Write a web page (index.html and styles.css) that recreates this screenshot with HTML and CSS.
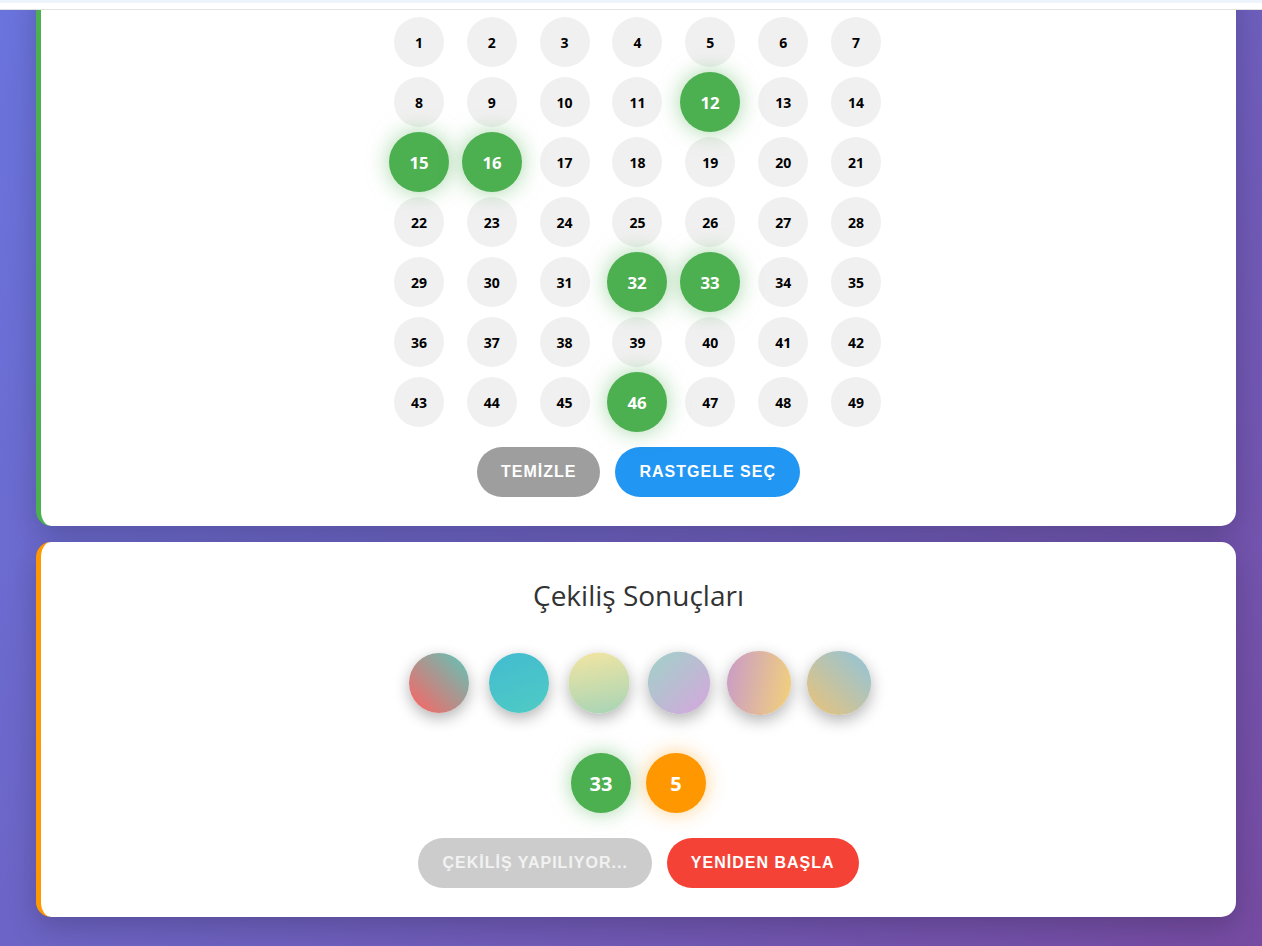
FILE: index.html
```html
<!DOCTYPE html>
<html lang="tr">
<head>
<meta charset="utf-8">
<title>Sayısal Loto</title>
<link rel="stylesheet" href="styles.css">
</head>
<body>
<div class="topbar"></div>
<main class="page">
  <section class="card card-select">
    <div class="grid">
      <div class="ball">1</div><div class="ball">2</div><div class="ball">3</div><div class="ball">4</div><div class="ball">5</div><div class="ball">6</div><div class="ball">7</div>
      <div class="ball">8</div><div class="ball">9</div><div class="ball">10</div><div class="ball">11</div><div class="ball selected">12</div><div class="ball">13</div><div class="ball">14</div>
      <div class="ball selected">15</div><div class="ball selected">16</div><div class="ball">17</div><div class="ball">18</div><div class="ball">19</div><div class="ball">20</div><div class="ball">21</div>
      <div class="ball">22</div><div class="ball">23</div><div class="ball">24</div><div class="ball">25</div><div class="ball">26</div><div class="ball">27</div><div class="ball">28</div>
      <div class="ball">29</div><div class="ball">30</div><div class="ball">31</div><div class="ball selected">32</div><div class="ball selected">33</div><div class="ball">34</div><div class="ball">35</div>
      <div class="ball">36</div><div class="ball">37</div><div class="ball">38</div><div class="ball">39</div><div class="ball">40</div><div class="ball">41</div><div class="ball">42</div>
      <div class="ball">43</div><div class="ball">44</div><div class="ball">45</div><div class="ball selected">46</div><div class="ball">47</div><div class="ball">48</div><div class="ball">49</div>
    </div>
    <div class="actions">
      <button class="btn btn-gray">TEMİZLE</button>
      <button class="btn btn-blue">RASTGELE SEÇ</button>
    </div>
  </section>

  <section class="card card-results">
    <h2 class="title">Çekiliş Sonuçları</h2>
    <div class="spin-row">
      <div class="spin spin-1"></div>
      <div class="spin spin-2"></div>
      <div class="spin spin-3"></div>
      <div class="spin spin-4"></div>
      <div class="spin spin-5"></div>
      <div class="spin spin-6"></div>
    </div>
    <div class="drawn-row">
      <div class="drawn drawn-green">33</div>
      <div class="drawn drawn-orange">5</div>
    </div>
    <div class="actions actions-results">
      <button class="btn btn-disabled">ÇEKİLİŞ YAPILIYOR...</button>
      <button class="btn btn-red">YENİDEN BAŞLA</button>
    </div>
  </section>
</main>
</body>
</html>
```

FILE: styles.css
```css
html, body {
  margin: 0;
  padding: 0;
}

body {
  min-height: 946px;
  background: linear-gradient(135deg, #6a74dd 0%, #6d62c2 50%, #764ba2 100%) fixed;
  font-family: "Open Sans", "Noto Sans", sans-serif;
  overflow: hidden;
}

.topbar {
  position: fixed;
  top: 0;
  left: 0;
  right: 0;
  height: 9px;
  background: linear-gradient(#eef4fc 0 3px, #ffffff 3px);
  border-bottom: 1px solid #e3e3e3;
  z-index: 10;
}

.page {
  margin: 0 26px 0 36px;
  display: flex;
  flex-direction: column;
  gap: 16px;
}

.card {
  background: #ffffff;
  border-radius: 15px;
  box-shadow: 0 10px 30px rgba(0, 0, 0, 0.2);
  padding: 30px 30px 29px;
}

.card-select {
  border-left: 5px solid #4caf50;
  margin-top: -20px;
  padding-top: 37px;
}

.card-results {
  border-left: 5px solid #ff9800;
  padding-bottom: 29px;
}

.grid {
  max-width: 500px;
  margin: 0 auto;
  display: grid;
  grid-template-columns: repeat(7, 1fr);
  gap: 10px;
  transform: translateX(-1px);
}

.ball {
  justify-self: center;
  width: 50px;
  height: 50px;
  border-radius: 50%;
  background: #f0f0f0;
  color: #000;
  font-weight: 700;
  font-size: 14px;
  display: flex;
  align-items: center;
  justify-content: center;
}

.ball.selected {
  background: #4caf50;
  color: #ffffff;
  transform: scale(1.2);
  box-shadow: 0 0 18px rgba(76, 175, 80, 0.5);
}

.actions {
  display: flex;
  justify-content: center;
  gap: 15px;
  margin-top: 20px;
}

.actions-results {
  margin-top: 25px;
}

.btn {
  height: 50px;
  padding: 0 24px;
  border: none;
  border-radius: 25px;
  color: #ffffff;
  font-family: "Liberation Sans", Arial, sans-serif;
  font-weight: 700;
  font-size: 16px;
  letter-spacing: 1px;
}

.btn-gray { background: #9e9e9e; }
.btn-blue { background: #2196f3; }
.btn-red { background: #f44336; }
.btn-disabled { background: #cccccc; color: #f2f2f2; }

.title {
  margin: 5px 0 0;
  text-align: center;
  font-size: 28px;
  line-height: 36px;
  font-weight: 500;
  color: #333333;
}

.spin-row {
  display: flex;
  justify-content: center;
  gap: 20px;
  margin-top: 40px;
}

.spin {
  width: 60px;
  height: 60px;
  border-radius: 50%;
  box-shadow: 0 5px 15px rgba(0, 0, 0, 0.3);
}

.spin-1 { background: linear-gradient(45deg, #e8706e 15%, #6dbcb1 90%); }
.spin-2 { background: linear-gradient(160deg, #43bbd0, #4fcbc4); }
.spin-3 { background: linear-gradient(170deg, #f3e5a2, #a6d4b6); transform: scale(1.02); }
.spin-4 { background: linear-gradient(135deg, #9fd2c8, #d6a6dd); transform: scale(1.04); }
.spin-5 { background: linear-gradient(100deg, #c99ac8, #f2d27a); transform: scale(1.07); }
.spin-6 { background: linear-gradient(225deg, #8fc4dc, #ebc278); transform: scale(1.07); }

.drawn-row {
  display: flex;
  justify-content: center;
  gap: 15px;
  margin-top: 40px;
}

.drawn {
  width: 60px;
  height: 60px;
  border-radius: 50%;
  color: #ffffff;
  font-weight: 700;
  font-size: 20px;
  display: flex;
  align-items: center;
  justify-content: center;
}

.drawn-green {
  background: #4caf50;
  box-shadow: 0 0 20px rgba(76, 175, 80, 0.5);
}

.drawn-orange {
  background: #ff9800;
  box-shadow: 0 0 20px rgba(255, 152, 0, 0.45);
}
```
